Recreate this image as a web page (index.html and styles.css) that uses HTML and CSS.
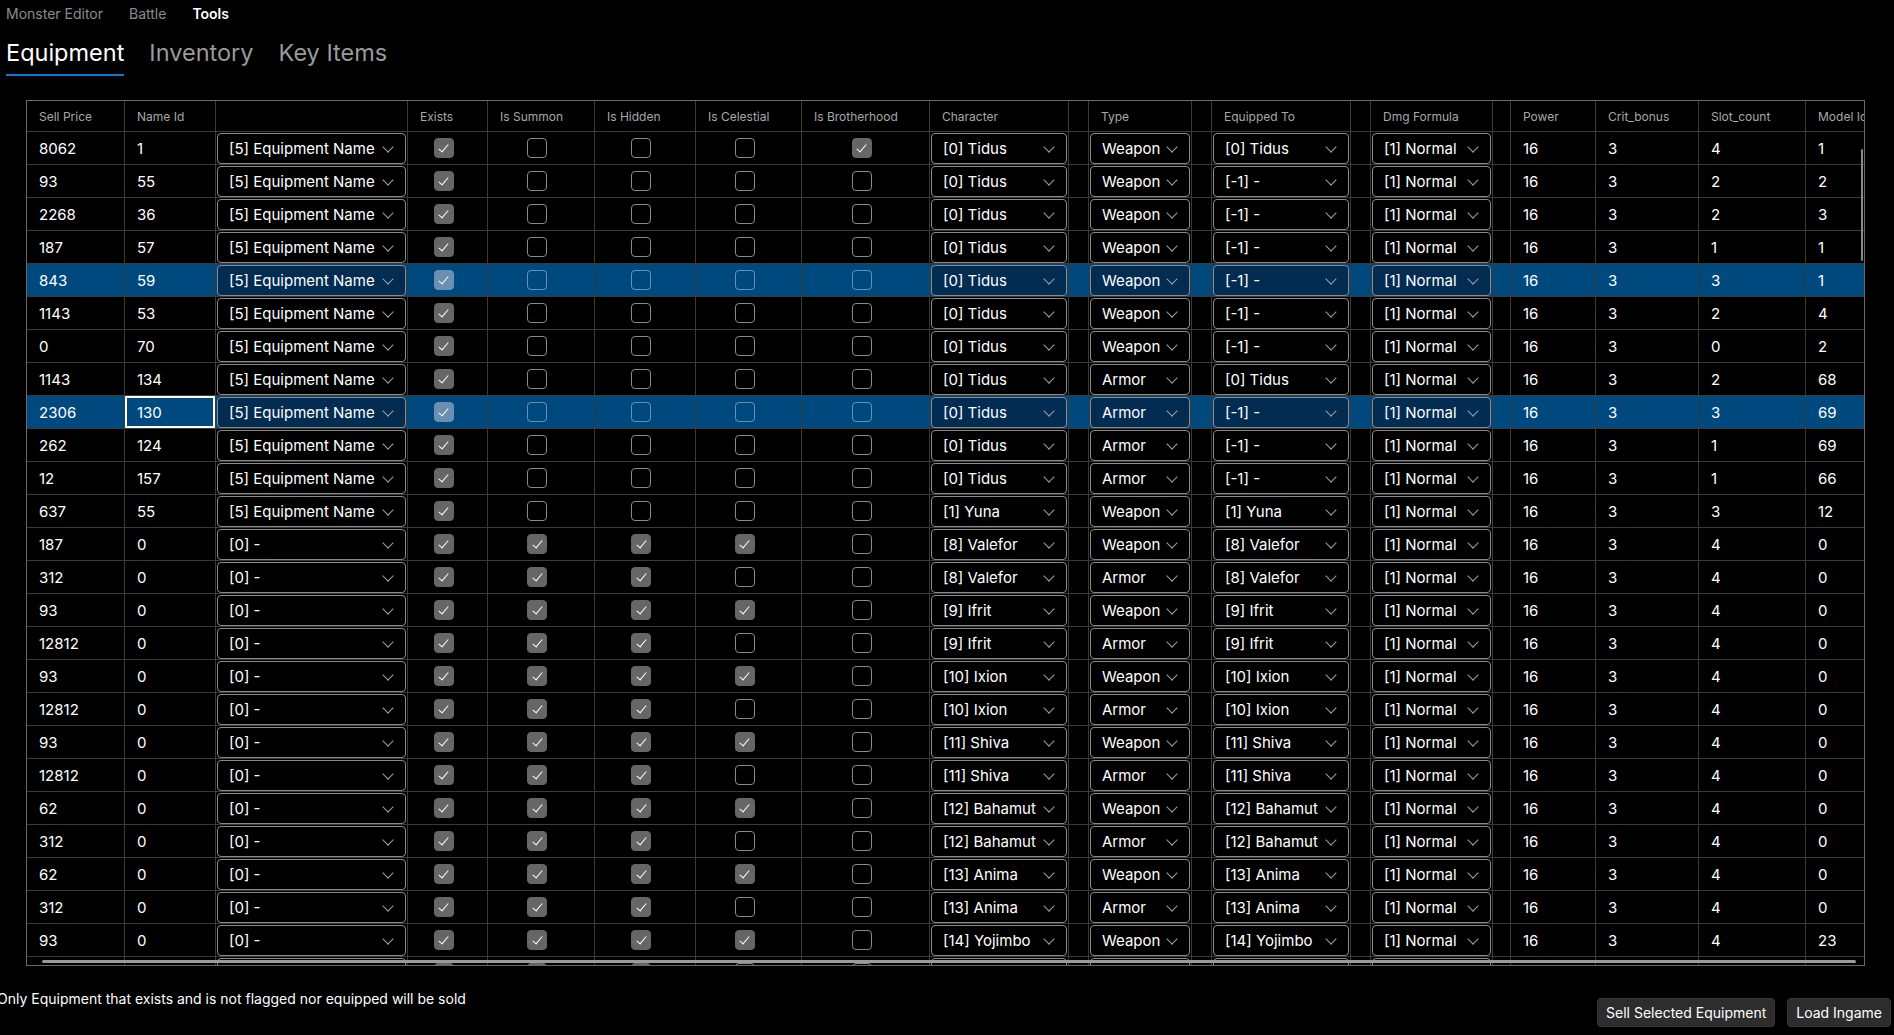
FILE: index.html
```html
<!DOCTYPE html>
<html>
<head>
<meta charset="utf-8">
<title>Tools - Equipment</title>
<link rel="stylesheet" href="styles.css">
</head>
<body>
<nav class="nav">
  <span class="nav-item">Monster Editor</span>
  <span class="nav-item">Battle</span>
  <span class="nav-item active">Tools</span>
</nav>
<div class="tabs">
  <span class="tab active">Equipment</span>
  <span class="tab">Inventory</span>
  <span class="tab">Key Items</span>
</div>

<div class="table">
  <div class="head grid">
    <div class="c">Sell Price</div><div class="c">Name Id</div><div class="c"></div><div class="c">Exists</div><div class="c">Is Summon</div><div class="c">Is Hidden</div><div class="c">Is Celestial</div><div class="c">Is Brotherhood</div><div class="c">Character</div><div class="c"></div><div class="c">Type</div><div class="c"></div><div class="c">Equipped To</div><div class="c"></div><div class="c">Dmg Formula</div><div class="c"></div><div class="c">Power</div><div class="c">Crit_bonus</div><div class="c">Slot_count</div><div class="c">Model Id</div>
  </div>

  <div class="row grid">
    <div class="c">8062</div><div class="c">1</div>
    <div class="c d"><div class="dd"><span>[5] Equipment Name</span><span class="chev"></span></div></div>
    <div class="c k"><span class="cb on"></span></div><div class="c k"><span class="cb"></span></div><div class="c k"><span class="cb"></span></div><div class="c k"><span class="cb"></span></div><div class="c k"><span class="cb on"></span></div>
    <div class="c d"><div class="dd"><span>[0] Tidus</span><span class="chev"></span></div></div><div class="c"></div>
    <div class="c d"><div class="dd"><span>Weapon</span><span class="chev"></span></div></div><div class="c"></div>
    <div class="c d"><div class="dd"><span>[0] Tidus</span><span class="chev"></span></div></div><div class="c"></div>
    <div class="c d"><div class="dd"><span>[1] Normal</span><span class="chev"></span></div></div><div class="c"></div>
    <div class="c">16</div><div class="c">3</div><div class="c">4</div><div class="c">1</div>
  </div>

  <div class="row grid">
    <div class="c">93</div><div class="c">55</div>
    <div class="c d"><div class="dd"><span>[5] Equipment Name</span><span class="chev"></span></div></div>
    <div class="c k"><span class="cb on"></span></div><div class="c k"><span class="cb"></span></div><div class="c k"><span class="cb"></span></div><div class="c k"><span class="cb"></span></div><div class="c k"><span class="cb"></span></div>
    <div class="c d"><div class="dd"><span>[0] Tidus</span><span class="chev"></span></div></div><div class="c"></div>
    <div class="c d"><div class="dd"><span>Weapon</span><span class="chev"></span></div></div><div class="c"></div>
    <div class="c d"><div class="dd"><span>[-1] -</span><span class="chev"></span></div></div><div class="c"></div>
    <div class="c d"><div class="dd"><span>[1] Normal</span><span class="chev"></span></div></div><div class="c"></div>
    <div class="c">16</div><div class="c">3</div><div class="c">2</div><div class="c">2</div>
  </div>

  <div class="row grid">
    <div class="c">2268</div><div class="c">36</div>
    <div class="c d"><div class="dd"><span>[5] Equipment Name</span><span class="chev"></span></div></div>
    <div class="c k"><span class="cb on"></span></div><div class="c k"><span class="cb"></span></div><div class="c k"><span class="cb"></span></div><div class="c k"><span class="cb"></span></div><div class="c k"><span class="cb"></span></div>
    <div class="c d"><div class="dd"><span>[0] Tidus</span><span class="chev"></span></div></div><div class="c"></div>
    <div class="c d"><div class="dd"><span>Weapon</span><span class="chev"></span></div></div><div class="c"></div>
    <div class="c d"><div class="dd"><span>[-1] -</span><span class="chev"></span></div></div><div class="c"></div>
    <div class="c d"><div class="dd"><span>[1] Normal</span><span class="chev"></span></div></div><div class="c"></div>
    <div class="c">16</div><div class="c">3</div><div class="c">2</div><div class="c">3</div>
  </div>

  <div class="row grid">
    <div class="c">187</div><div class="c">57</div>
    <div class="c d"><div class="dd"><span>[5] Equipment Name</span><span class="chev"></span></div></div>
    <div class="c k"><span class="cb on"></span></div><div class="c k"><span class="cb"></span></div><div class="c k"><span class="cb"></span></div><div class="c k"><span class="cb"></span></div><div class="c k"><span class="cb"></span></div>
    <div class="c d"><div class="dd"><span>[0] Tidus</span><span class="chev"></span></div></div><div class="c"></div>
    <div class="c d"><div class="dd"><span>Weapon</span><span class="chev"></span></div></div><div class="c"></div>
    <div class="c d"><div class="dd"><span>[-1] -</span><span class="chev"></span></div></div><div class="c"></div>
    <div class="c d"><div class="dd"><span>[1] Normal</span><span class="chev"></span></div></div><div class="c"></div>
    <div class="c">16</div><div class="c">3</div><div class="c">1</div><div class="c">1</div>
  </div>

  <div class="row grid sel">
    <div class="c">843</div><div class="c">59</div>
    <div class="c d"><div class="dd"><span>[5] Equipment Name</span><span class="chev"></span></div></div>
    <div class="c k"><span class="cb on"></span></div><div class="c k"><span class="cb"></span></div><div class="c k"><span class="cb"></span></div><div class="c k"><span class="cb"></span></div><div class="c k"><span class="cb"></span></div>
    <div class="c d"><div class="dd"><span>[0] Tidus</span><span class="chev"></span></div></div><div class="c"></div>
    <div class="c d"><div class="dd"><span>Weapon</span><span class="chev"></span></div></div><div class="c"></div>
    <div class="c d"><div class="dd"><span>[-1] -</span><span class="chev"></span></div></div><div class="c"></div>
    <div class="c d"><div class="dd"><span>[1] Normal</span><span class="chev"></span></div></div><div class="c"></div>
    <div class="c">16</div><div class="c">3</div><div class="c">3</div><div class="c">1</div>
  </div>

  <div class="row grid">
    <div class="c">1143</div><div class="c">53</div>
    <div class="c d"><div class="dd"><span>[5] Equipment Name</span><span class="chev"></span></div></div>
    <div class="c k"><span class="cb on"></span></div><div class="c k"><span class="cb"></span></div><div class="c k"><span class="cb"></span></div><div class="c k"><span class="cb"></span></div><div class="c k"><span class="cb"></span></div>
    <div class="c d"><div class="dd"><span>[0] Tidus</span><span class="chev"></span></div></div><div class="c"></div>
    <div class="c d"><div class="dd"><span>Weapon</span><span class="chev"></span></div></div><div class="c"></div>
    <div class="c d"><div class="dd"><span>[-1] -</span><span class="chev"></span></div></div><div class="c"></div>
    <div class="c d"><div class="dd"><span>[1] Normal</span><span class="chev"></span></div></div><div class="c"></div>
    <div class="c">16</div><div class="c">3</div><div class="c">2</div><div class="c">4</div>
  </div>

  <div class="row grid">
    <div class="c">0</div><div class="c">70</div>
    <div class="c d"><div class="dd"><span>[5] Equipment Name</span><span class="chev"></span></div></div>
    <div class="c k"><span class="cb on"></span></div><div class="c k"><span class="cb"></span></div><div class="c k"><span class="cb"></span></div><div class="c k"><span class="cb"></span></div><div class="c k"><span class="cb"></span></div>
    <div class="c d"><div class="dd"><span>[0] Tidus</span><span class="chev"></span></div></div><div class="c"></div>
    <div class="c d"><div class="dd"><span>Weapon</span><span class="chev"></span></div></div><div class="c"></div>
    <div class="c d"><div class="dd"><span>[-1] -</span><span class="chev"></span></div></div><div class="c"></div>
    <div class="c d"><div class="dd"><span>[1] Normal</span><span class="chev"></span></div></div><div class="c"></div>
    <div class="c">16</div><div class="c">3</div><div class="c">0</div><div class="c">2</div>
  </div>

  <div class="row grid">
    <div class="c">1143</div><div class="c">134</div>
    <div class="c d"><div class="dd"><span>[5] Equipment Name</span><span class="chev"></span></div></div>
    <div class="c k"><span class="cb on"></span></div><div class="c k"><span class="cb"></span></div><div class="c k"><span class="cb"></span></div><div class="c k"><span class="cb"></span></div><div class="c k"><span class="cb"></span></div>
    <div class="c d"><div class="dd"><span>[0] Tidus</span><span class="chev"></span></div></div><div class="c"></div>
    <div class="c d"><div class="dd"><span>Armor</span><span class="chev"></span></div></div><div class="c"></div>
    <div class="c d"><div class="dd"><span>[0] Tidus</span><span class="chev"></span></div></div><div class="c"></div>
    <div class="c d"><div class="dd"><span>[1] Normal</span><span class="chev"></span></div></div><div class="c"></div>
    <div class="c">16</div><div class="c">3</div><div class="c">2</div><div class="c">68</div>
  </div>

  <div class="row grid sel">
    <div class="c">2306</div><div class="c focus">130</div>
    <div class="c d"><div class="dd"><span>[5] Equipment Name</span><span class="chev"></span></div></div>
    <div class="c k"><span class="cb on"></span></div><div class="c k"><span class="cb"></span></div><div class="c k"><span class="cb"></span></div><div class="c k"><span class="cb"></span></div><div class="c k"><span class="cb"></span></div>
    <div class="c d"><div class="dd"><span>[0] Tidus</span><span class="chev"></span></div></div><div class="c"></div>
    <div class="c d"><div class="dd"><span>Armor</span><span class="chev"></span></div></div><div class="c"></div>
    <div class="c d"><div class="dd"><span>[-1] -</span><span class="chev"></span></div></div><div class="c"></div>
    <div class="c d"><div class="dd"><span>[1] Normal</span><span class="chev"></span></div></div><div class="c"></div>
    <div class="c">16</div><div class="c">3</div><div class="c">3</div><div class="c">69</div>
  </div>

  <div class="row grid">
    <div class="c">262</div><div class="c">124</div>
    <div class="c d"><div class="dd"><span>[5] Equipment Name</span><span class="chev"></span></div></div>
    <div class="c k"><span class="cb on"></span></div><div class="c k"><span class="cb"></span></div><div class="c k"><span class="cb"></span></div><div class="c k"><span class="cb"></span></div><div class="c k"><span class="cb"></span></div>
    <div class="c d"><div class="dd"><span>[0] Tidus</span><span class="chev"></span></div></div><div class="c"></div>
    <div class="c d"><div class="dd"><span>Armor</span><span class="chev"></span></div></div><div class="c"></div>
    <div class="c d"><div class="dd"><span>[-1] -</span><span class="chev"></span></div></div><div class="c"></div>
    <div class="c d"><div class="dd"><span>[1] Normal</span><span class="chev"></span></div></div><div class="c"></div>
    <div class="c">16</div><div class="c">3</div><div class="c">1</div><div class="c">69</div>
  </div>

  <div class="row grid">
    <div class="c">12</div><div class="c">157</div>
    <div class="c d"><div class="dd"><span>[5] Equipment Name</span><span class="chev"></span></div></div>
    <div class="c k"><span class="cb on"></span></div><div class="c k"><span class="cb"></span></div><div class="c k"><span class="cb"></span></div><div class="c k"><span class="cb"></span></div><div class="c k"><span class="cb"></span></div>
    <div class="c d"><div class="dd"><span>[0] Tidus</span><span class="chev"></span></div></div><div class="c"></div>
    <div class="c d"><div class="dd"><span>Armor</span><span class="chev"></span></div></div><div class="c"></div>
    <div class="c d"><div class="dd"><span>[-1] -</span><span class="chev"></span></div></div><div class="c"></div>
    <div class="c d"><div class="dd"><span>[1] Normal</span><span class="chev"></span></div></div><div class="c"></div>
    <div class="c">16</div><div class="c">3</div><div class="c">1</div><div class="c">66</div>
  </div>

  <div class="row grid">
    <div class="c">637</div><div class="c">55</div>
    <div class="c d"><div class="dd"><span>[5] Equipment Name</span><span class="chev"></span></div></div>
    <div class="c k"><span class="cb on"></span></div><div class="c k"><span class="cb"></span></div><div class="c k"><span class="cb"></span></div><div class="c k"><span class="cb"></span></div><div class="c k"><span class="cb"></span></div>
    <div class="c d"><div class="dd"><span>[1] Yuna</span><span class="chev"></span></div></div><div class="c"></div>
    <div class="c d"><div class="dd"><span>Weapon</span><span class="chev"></span></div></div><div class="c"></div>
    <div class="c d"><div class="dd"><span>[1] Yuna</span><span class="chev"></span></div></div><div class="c"></div>
    <div class="c d"><div class="dd"><span>[1] Normal</span><span class="chev"></span></div></div><div class="c"></div>
    <div class="c">16</div><div class="c">3</div><div class="c">3</div><div class="c">12</div>
  </div>

  <div class="row grid">
    <div class="c">187</div><div class="c">0</div>
    <div class="c d"><div class="dd"><span>[0] -</span><span class="chev"></span></div></div>
    <div class="c k"><span class="cb on"></span></div><div class="c k"><span class="cb on"></span></div><div class="c k"><span class="cb on"></span></div><div class="c k"><span class="cb on"></span></div><div class="c k"><span class="cb"></span></div>
    <div class="c d"><div class="dd"><span>[8] Valefor</span><span class="chev"></span></div></div><div class="c"></div>
    <div class="c d"><div class="dd"><span>Weapon</span><span class="chev"></span></div></div><div class="c"></div>
    <div class="c d"><div class="dd"><span>[8] Valefor</span><span class="chev"></span></div></div><div class="c"></div>
    <div class="c d"><div class="dd"><span>[1] Normal</span><span class="chev"></span></div></div><div class="c"></div>
    <div class="c">16</div><div class="c">3</div><div class="c">4</div><div class="c">0</div>
  </div>

  <div class="row grid">
    <div class="c">312</div><div class="c">0</div>
    <div class="c d"><div class="dd"><span>[0] -</span><span class="chev"></span></div></div>
    <div class="c k"><span class="cb on"></span></div><div class="c k"><span class="cb on"></span></div><div class="c k"><span class="cb on"></span></div><div class="c k"><span class="cb"></span></div><div class="c k"><span class="cb"></span></div>
    <div class="c d"><div class="dd"><span>[8] Valefor</span><span class="chev"></span></div></div><div class="c"></div>
    <div class="c d"><div class="dd"><span>Armor</span><span class="chev"></span></div></div><div class="c"></div>
    <div class="c d"><div class="dd"><span>[8] Valefor</span><span class="chev"></span></div></div><div class="c"></div>
    <div class="c d"><div class="dd"><span>[1] Normal</span><span class="chev"></span></div></div><div class="c"></div>
    <div class="c">16</div><div class="c">3</div><div class="c">4</div><div class="c">0</div>
  </div>

  <div class="row grid">
    <div class="c">93</div><div class="c">0</div>
    <div class="c d"><div class="dd"><span>[0] -</span><span class="chev"></span></div></div>
    <div class="c k"><span class="cb on"></span></div><div class="c k"><span class="cb on"></span></div><div class="c k"><span class="cb on"></span></div><div class="c k"><span class="cb on"></span></div><div class="c k"><span class="cb"></span></div>
    <div class="c d"><div class="dd"><span>[9] Ifrit</span><span class="chev"></span></div></div><div class="c"></div>
    <div class="c d"><div class="dd"><span>Weapon</span><span class="chev"></span></div></div><div class="c"></div>
    <div class="c d"><div class="dd"><span>[9] Ifrit</span><span class="chev"></span></div></div><div class="c"></div>
    <div class="c d"><div class="dd"><span>[1] Normal</span><span class="chev"></span></div></div><div class="c"></div>
    <div class="c">16</div><div class="c">3</div><div class="c">4</div><div class="c">0</div>
  </div>

  <div class="row grid">
    <div class="c">12812</div><div class="c">0</div>
    <div class="c d"><div class="dd"><span>[0] -</span><span class="chev"></span></div></div>
    <div class="c k"><span class="cb on"></span></div><div class="c k"><span class="cb on"></span></div><div class="c k"><span class="cb on"></span></div><div class="c k"><span class="cb"></span></div><div class="c k"><span class="cb"></span></div>
    <div class="c d"><div class="dd"><span>[9] Ifrit</span><span class="chev"></span></div></div><div class="c"></div>
    <div class="c d"><div class="dd"><span>Armor</span><span class="chev"></span></div></div><div class="c"></div>
    <div class="c d"><div class="dd"><span>[9] Ifrit</span><span class="chev"></span></div></div><div class="c"></div>
    <div class="c d"><div class="dd"><span>[1] Normal</span><span class="chev"></span></div></div><div class="c"></div>
    <div class="c">16</div><div class="c">3</div><div class="c">4</div><div class="c">0</div>
  </div>

  <div class="row grid">
    <div class="c">93</div><div class="c">0</div>
    <div class="c d"><div class="dd"><span>[0] -</span><span class="chev"></span></div></div>
    <div class="c k"><span class="cb on"></span></div><div class="c k"><span class="cb on"></span></div><div class="c k"><span class="cb on"></span></div><div class="c k"><span class="cb on"></span></div><div class="c k"><span class="cb"></span></div>
    <div class="c d"><div class="dd"><span>[10] Ixion</span><span class="chev"></span></div></div><div class="c"></div>
    <div class="c d"><div class="dd"><span>Weapon</span><span class="chev"></span></div></div><div class="c"></div>
    <div class="c d"><div class="dd"><span>[10] Ixion</span><span class="chev"></span></div></div><div class="c"></div>
    <div class="c d"><div class="dd"><span>[1] Normal</span><span class="chev"></span></div></div><div class="c"></div>
    <div class="c">16</div><div class="c">3</div><div class="c">4</div><div class="c">0</div>
  </div>

  <div class="row grid">
    <div class="c">12812</div><div class="c">0</div>
    <div class="c d"><div class="dd"><span>[0] -</span><span class="chev"></span></div></div>
    <div class="c k"><span class="cb on"></span></div><div class="c k"><span class="cb on"></span></div><div class="c k"><span class="cb on"></span></div><div class="c k"><span class="cb"></span></div><div class="c k"><span class="cb"></span></div>
    <div class="c d"><div class="dd"><span>[10] Ixion</span><span class="chev"></span></div></div><div class="c"></div>
    <div class="c d"><div class="dd"><span>Armor</span><span class="chev"></span></div></div><div class="c"></div>
    <div class="c d"><div class="dd"><span>[10] Ixion</span><span class="chev"></span></div></div><div class="c"></div>
    <div class="c d"><div class="dd"><span>[1] Normal</span><span class="chev"></span></div></div><div class="c"></div>
    <div class="c">16</div><div class="c">3</div><div class="c">4</div><div class="c">0</div>
  </div>

  <div class="row grid">
    <div class="c">93</div><div class="c">0</div>
    <div class="c d"><div class="dd"><span>[0] -</span><span class="chev"></span></div></div>
    <div class="c k"><span class="cb on"></span></div><div class="c k"><span class="cb on"></span></div><div class="c k"><span class="cb on"></span></div><div class="c k"><span class="cb on"></span></div><div class="c k"><span class="cb"></span></div>
    <div class="c d"><div class="dd"><span>[11] Shiva</span><span class="chev"></span></div></div><div class="c"></div>
    <div class="c d"><div class="dd"><span>Weapon</span><span class="chev"></span></div></div><div class="c"></div>
    <div class="c d"><div class="dd"><span>[11] Shiva</span><span class="chev"></span></div></div><div class="c"></div>
    <div class="c d"><div class="dd"><span>[1] Normal</span><span class="chev"></span></div></div><div class="c"></div>
    <div class="c">16</div><div class="c">3</div><div class="c">4</div><div class="c">0</div>
  </div>

  <div class="row grid">
    <div class="c">12812</div><div class="c">0</div>
    <div class="c d"><div class="dd"><span>[0] -</span><span class="chev"></span></div></div>
    <div class="c k"><span class="cb on"></span></div><div class="c k"><span class="cb on"></span></div><div class="c k"><span class="cb on"></span></div><div class="c k"><span class="cb"></span></div><div class="c k"><span class="cb"></span></div>
    <div class="c d"><div class="dd"><span>[11] Shiva</span><span class="chev"></span></div></div><div class="c"></div>
    <div class="c d"><div class="dd"><span>Armor</span><span class="chev"></span></div></div><div class="c"></div>
    <div class="c d"><div class="dd"><span>[11] Shiva</span><span class="chev"></span></div></div><div class="c"></div>
    <div class="c d"><div class="dd"><span>[1] Normal</span><span class="chev"></span></div></div><div class="c"></div>
    <div class="c">16</div><div class="c">3</div><div class="c">4</div><div class="c">0</div>
  </div>

  <div class="row grid">
    <div class="c">62</div><div class="c">0</div>
    <div class="c d"><div class="dd"><span>[0] -</span><span class="chev"></span></div></div>
    <div class="c k"><span class="cb on"></span></div><div class="c k"><span class="cb on"></span></div><div class="c k"><span class="cb on"></span></div><div class="c k"><span class="cb on"></span></div><div class="c k"><span class="cb"></span></div>
    <div class="c d"><div class="dd"><span>[12] Bahamut</span><span class="chev"></span></div></div><div class="c"></div>
    <div class="c d"><div class="dd"><span>Weapon</span><span class="chev"></span></div></div><div class="c"></div>
    <div class="c d"><div class="dd"><span>[12] Bahamut</span><span class="chev"></span></div></div><div class="c"></div>
    <div class="c d"><div class="dd"><span>[1] Normal</span><span class="chev"></span></div></div><div class="c"></div>
    <div class="c">16</div><div class="c">3</div><div class="c">4</div><div class="c">0</div>
  </div>

  <div class="row grid">
    <div class="c">312</div><div class="c">0</div>
    <div class="c d"><div class="dd"><span>[0] -</span><span class="chev"></span></div></div>
    <div class="c k"><span class="cb on"></span></div><div class="c k"><span class="cb on"></span></div><div class="c k"><span class="cb on"></span></div><div class="c k"><span class="cb"></span></div><div class="c k"><span class="cb"></span></div>
    <div class="c d"><div class="dd"><span>[12] Bahamut</span><span class="chev"></span></div></div><div class="c"></div>
    <div class="c d"><div class="dd"><span>Armor</span><span class="chev"></span></div></div><div class="c"></div>
    <div class="c d"><div class="dd"><span>[12] Bahamut</span><span class="chev"></span></div></div><div class="c"></div>
    <div class="c d"><div class="dd"><span>[1] Normal</span><span class="chev"></span></div></div><div class="c"></div>
    <div class="c">16</div><div class="c">3</div><div class="c">4</div><div class="c">0</div>
  </div>

  <div class="row grid">
    <div class="c">62</div><div class="c">0</div>
    <div class="c d"><div class="dd"><span>[0] -</span><span class="chev"></span></div></div>
    <div class="c k"><span class="cb on"></span></div><div class="c k"><span class="cb on"></span></div><div class="c k"><span class="cb on"></span></div><div class="c k"><span class="cb on"></span></div><div class="c k"><span class="cb"></span></div>
    <div class="c d"><div class="dd"><span>[13] Anima</span><span class="chev"></span></div></div><div class="c"></div>
    <div class="c d"><div class="dd"><span>Weapon</span><span class="chev"></span></div></div><div class="c"></div>
    <div class="c d"><div class="dd"><span>[13] Anima</span><span class="chev"></span></div></div><div class="c"></div>
    <div class="c d"><div class="dd"><span>[1] Normal</span><span class="chev"></span></div></div><div class="c"></div>
    <div class="c">16</div><div class="c">3</div><div class="c">4</div><div class="c">0</div>
  </div>

  <div class="row grid">
    <div class="c">312</div><div class="c">0</div>
    <div class="c d"><div class="dd"><span>[0] -</span><span class="chev"></span></div></div>
    <div class="c k"><span class="cb on"></span></div><div class="c k"><span class="cb on"></span></div><div class="c k"><span class="cb on"></span></div><div class="c k"><span class="cb"></span></div><div class="c k"><span class="cb"></span></div>
    <div class="c d"><div class="dd"><span>[13] Anima</span><span class="chev"></span></div></div><div class="c"></div>
    <div class="c d"><div class="dd"><span>Armor</span><span class="chev"></span></div></div><div class="c"></div>
    <div class="c d"><div class="dd"><span>[13] Anima</span><span class="chev"></span></div></div><div class="c"></div>
    <div class="c d"><div class="dd"><span>[1] Normal</span><span class="chev"></span></div></div><div class="c"></div>
    <div class="c">16</div><div class="c">3</div><div class="c">4</div><div class="c">0</div>
  </div>

  <div class="row grid">
    <div class="c">93</div><div class="c">0</div>
    <div class="c d"><div class="dd"><span>[0] -</span><span class="chev"></span></div></div>
    <div class="c k"><span class="cb on"></span></div><div class="c k"><span class="cb on"></span></div><div class="c k"><span class="cb on"></span></div><div class="c k"><span class="cb on"></span></div><div class="c k"><span class="cb"></span></div>
    <div class="c d"><div class="dd"><span>[14] Yojimbo</span><span class="chev"></span></div></div><div class="c"></div>
    <div class="c d"><div class="dd"><span>Weapon</span><span class="chev"></span></div></div><div class="c"></div>
    <div class="c d"><div class="dd"><span>[14] Yojimbo</span><span class="chev"></span></div></div><div class="c"></div>
    <div class="c d"><div class="dd"><span>[1] Normal</span><span class="chev"></span></div></div><div class="c"></div>
    <div class="c">16</div><div class="c">3</div><div class="c">4</div><div class="c">23</div>
  </div>

  <div class="row grid">
    <div class="c"></div><div class="c"></div>
    <div class="c d"><div class="dd"><span>[0] -</span><span class="chev"></span></div></div>
    <div class="c k"><span class="cb on"></span></div><div class="c k"><span class="cb on"></span></div><div class="c k"><span class="cb on"></span></div><div class="c k"><span class="cb"></span></div><div class="c k"><span class="cb"></span></div>
    <div class="c d"><div class="dd"><span>[14] Yojimbo</span><span class="chev"></span></div></div><div class="c"></div>
    <div class="c d"><div class="dd"><span>Armor</span><span class="chev"></span></div></div><div class="c"></div>
    <div class="c d"><div class="dd"><span>[14] Yojimbo</span><span class="chev"></span></div></div><div class="c"></div>
    <div class="c d"><div class="dd"><span>[1] Normal</span><span class="chev"></span></div></div><div class="c"></div>
    <div class="c"></div><div class="c"></div><div class="c"></div><div class="c"></div>
  </div>

  <div class="vscroll"></div>
  <div class="hscroll"></div>
</div>

<footer class="footer">
  <span class="note">Only Equipment that exists and is not flagged nor equipped will be sold</span>
  <div class="btns">
    <button class="btn">Sell Selected Equipment</button>
    <button class="btn">Load Ingame</button>
  </div>
</footer>
</body>
</html>
```

FILE: styles.css
```css
html, body {
  margin: 0;
  padding: 0;
}
body {
  background: #000;
  color: #fff;
  font-family: Inter, "Segoe UI", "Noto Sans", sans-serif;
  width: 1894px;
  height: 1035px;
  overflow: hidden;
}

.nav {
  display: flex;
  gap: 26px;
  padding: 4px 0 0 6px;
  height: 20px;
  font-size: 14px;
  line-height: 20px;
  color: #8c8c8c;
}
.nav-item.active {
  color: #fff;
  font-weight: 600;
}

.tabs {
  display: flex;
  gap: 25px;
  padding-left: 6px;
  margin-top: 13px;
}
.tab {
  font-size: 23.5px;
  line-height: 32px;
  color: #9a9a9a;
  padding-bottom: 5px;
  border-bottom: 2px solid transparent;
}
.tab.active {
  color: #fff;
  border-bottom-color: #0f78d4;
}

.table {
  position: relative;
  box-sizing: border-box;
  margin: 24px 0 0 26px;
  width: 1839px;
  height: 866px;
  border: 1px solid #6a6a6a;
  overflow: hidden;
}

.grid {
  display: grid;
  grid-template-columns: 98px 91px 192px 80px 107px 101px 106px 128px 139px 20px 103px 20px 139px 20px 122px 18px 85px 103px 107px 100px;
  box-sizing: border-box;
}
.head {
  height: 31px;
  border-bottom: 1px solid #3c3c3c;
  font-size: 12px;
  color: #a8a8a8;
}
.row {
  height: 33px;
  border-bottom: 1px solid #3a3a3a;
  font-size: 15px;
}
.c {
  box-sizing: border-box;
  border-right: 1px solid #3a3a3a;
  display: flex;
  align-items: center;
  padding-left: 12px;
  overflow: hidden;
  white-space: nowrap;
  min-width: 0;
}
.c.d {
  padding: 0 1px;
  align-items: stretch;
}
.c.k {
  justify-content: center;
  padding: 0 8px 0 0;
}
.c.focus {
  box-shadow: inset 0 0 0 2px #fff;
}

.dd {
  flex: 1;
  box-sizing: border-box;
  margin: 1px 0 0 0;
  height: 31px;
  border: 1px solid #8a8a8a;
  border-radius: 4px;
  background: #000;
  display: flex;
  align-items: center;
  justify-content: space-between;
  padding: 0 11px 0 11px;
  min-width: 0;
}
.chev {
  width: 7px;
  height: 7px;
  border-right: 1px solid #a0a0a0;
  border-bottom: 1px solid #a0a0a0;
  transform: translateY(-2px) rotate(45deg);
  flex: none;
  margin-right: 2px;
}

.cb {
  width: 20px;
  height: 20px;
  box-sizing: border-box;
  border: 1px solid #8a8a8a;
  border-radius: 4px;
  display: flex;
  align-items: center;
  justify-content: center;
}
.cb.on {
  background: #666;
  border-color: #666;
}
.cb.on::after {
  content: "";
  width: 4px;
  height: 9px;
  border-right: 1.5px solid #fff;
  border-bottom: 1.5px solid #fff;
  transform: translateY(-1px) rotate(40deg);
}

.row.sel {
  background: #00497f;
}
.row.sel .dd {
  background: #022c51;
}
.row.sel .cb {
  border-color: rgba(255,255,255,0.4);
}
.row.sel .cb.on {
  background: #6a8fb3;
  border-color: #6a8fb3;
}

.vscroll {
  position: absolute;
  right: 1px;
  top: 48px;
  width: 2px;
  height: 112px;
  background: #8a8a8a;
  border-radius: 1px;
}
.hscroll {
  position: absolute;
  left: 15px;
  right: 8px;
  bottom: 2px;
  height: 3px;
  background: #9a9a9a;
  border-radius: 2px;
}

.footer {
  display: flex;
  justify-content: space-between;
  align-items: flex-start;
}
.note {
  margin-top: 23px;
  margin-left: -3px;
  font-size: 14px;
  line-height: 20px;
}
.btns {
  display: flex;
  gap: 12px;
  margin-top: 32px;
  margin-right: 3px;
}
.btn {
  height: 29px;
  padding: 0 8px;
  background: #2d2d2d;
  border: 1px solid #363636;
  border-radius: 4px;
  color: #fff;
  font-family: inherit;
  font-size: 14px;
}
```
